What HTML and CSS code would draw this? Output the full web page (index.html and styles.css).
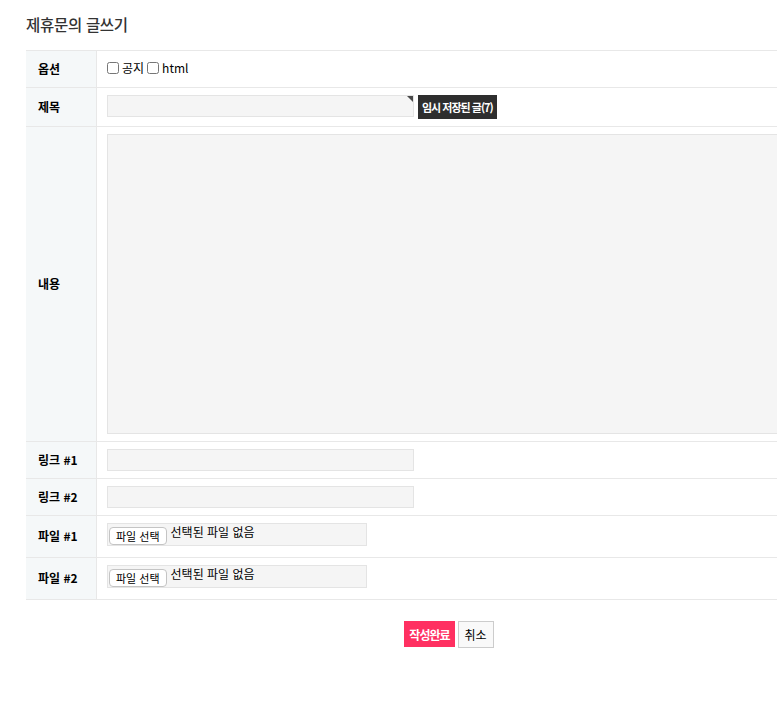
FILE: index.html
```html
<!DOCTYPE html>
<html lang="ko">
<head>
<meta charset="utf-8">
<title>제휴문의 글쓰기</title>
<link rel="stylesheet" href="styles.css">
</head>
<body>
<div class="wrap">
  <h2 class="title">제휴문의 글쓰기</h2>
  <div class="form">
    <div class="row r-opt">
      <div class="label">옵션</div>
      <div class="field">
        <label class="chk"><input type="checkbox"> 공지</label>
        <label class="chk"><input type="checkbox"> html</label>
      </div>
    </div>
    <div class="row r-subj">
      <div class="label">제목</div>
      <div class="field">
        <span class="req-wrap"><input type="text" class="inp inp-subject"></span>
        <button type="button" class="btn-temp">임시 저장된 글(7)</button>
      </div>
    </div>
    <div class="row">
      <div class="label">내용</div>
      <div class="field"><textarea class="content"></textarea></div>
    </div>
    <div class="row">
      <div class="label">링크 #1</div>
      <div class="field"><input type="text" class="inp"></div>
    </div>
    <div class="row">
      <div class="label">링크 #2</div>
      <div class="field"><input type="text" class="inp"></div>
    </div>
    <div class="row r-file">
      <div class="label">파일 #1</div>
      <div class="field">
        <div class="file"><span class="file-btn">파일 선택</span><span class="file-txt">선택된 파일 없음</span></div>
      </div>
    </div>
    <div class="row r-file">
      <div class="label">파일 #2</div>
      <div class="field">
        <div class="file"><span class="file-btn">파일 선택</span><span class="file-txt">선택된 파일 없음</span></div>
      </div>
    </div>
  </div>
  <div class="actions">
    <button type="button" class="btn-submit">작성완료</button>
    <button type="button" class="btn-cancel">취소</button>
  </div>
</div>
</body>
</html>
```
FILE: styles.css
```css
html, body {
  margin: 0;
  padding: 0;
  overflow: hidden;
  background: #fff;
}
body {
  font-family: "Noto Sans CJK KR", "Noto Sans", sans-serif;
  font-size: 12px;
  color: #000;
}
.wrap {
  width: 846px;
  margin-left: 26px;
}
.title {
  margin: 0;
  height: 50px;
  line-height: 48px;
  font-size: 15.5px;
  font-weight: 500;
  color: #333;
  letter-spacing: -0.3px;
}
.form {
  border-top: 1px solid #e8e8e8;
}
.row {
  display: flex;
  border-bottom: 1px solid #e8e8e8;
}
.label {
  width: 58px;
  flex: none;
  padding-left: 12px;
  padding-bottom: 2px;
  background: #f5f8f9;
  border-right: 1px solid #e8e8e8;
  display: flex;
  align-items: center;
  font-weight: bold;
  font-size: 12px;
  color: #000;
}
.field {
  flex: 1;
  padding: 7px 0 7px 10px;
  display: flex;
  align-items: center;
}
.r-opt .field {
  height: 22px;
}
.chk {
  display: inline-flex;
  align-items: center;
  margin-right: 3px;
  font-size: 12px;
  color: #000;
  line-height: 14px;
  position: relative;
  top: -1px;
}
.chk input {
  margin: 0 3px 0 0;
  width: 12px;
  height: 12px;
}
.inp {
  box-sizing: border-box;
  width: 307px;
  height: 22px;
  border: 1px solid #e4e4e4;
  background: #f5f5f5;
  padding: 0 4px;
  margin: 0;
  font-size: 12px;
  display: block;
}
.req-wrap {
  position: relative;
  display: inline-block;
  align-self: flex-start;
}
.req-wrap::after {
  content: "";
  position: absolute;
  right: 1px;
  top: 1px;
  width: 0;
  height: 0;
  border-top: 6px solid #4a4a4a;
  border-left: 6px solid transparent;
}
.btn-temp {
  margin-left: 4px;
  height: 24px;
  padding: 0 4px;
  border: 0;
  background: #2e2e2e;
  color: #fff;
  font-family: inherit;
  font-size: 11px;
  font-weight: bold;
  letter-spacing: -1px;
  cursor: pointer;
}
.content {
  box-sizing: border-box;
  display: block;
  width: 100%;
  height: 300px;
  margin: 0;
  border: 1px solid #e4e4e4;
  background: #f5f5f5;
  resize: none;
}
.r-file .field {
  padding: 7px 0 11px 10px;
}
.file {
  box-sizing: border-box;
  width: 260px;
  height: 23px;
  border: 1px solid #e4e4e4;
  background: #f5f5f5;
  display: flex;
  align-items: center;
  padding-left: 1px;
}
.file-btn {
  box-sizing: border-box;
  height: 18px;
  margin-top: 3px;
  padding: 0 6px;
  border: 1px solid #c4c4c4;
  border-radius: 4px;
  background: #fff;
  font-size: 11px;
  line-height: 16px;
  color: #000;
  align-self: flex-start;
}
.file-txt {
  margin-left: 4px;
  font-size: 12px;
  color: #000;
  align-self: flex-start;
  line-height: 18px;
  margin-top: -1px;
}
.actions {
  display: flex;
  justify-content: center;
  gap: 3px;
  margin-top: 21px;
}
.btn-submit {
  height: 26px;
  padding: 0 5px;
  border: 0;
  background: #ff3061;
  color: #fff;
  font-family: inherit;
  font-size: 12px;
  font-weight: bold;
  letter-spacing: -1px;
}
.btn-cancel {
  height: 27px;
  padding: 0 6px;
  border: 1px solid #cccccc;
  background: #f9f9f9;
  color: #000;
  font-family: inherit;
  font-size: 12px;
}
```
